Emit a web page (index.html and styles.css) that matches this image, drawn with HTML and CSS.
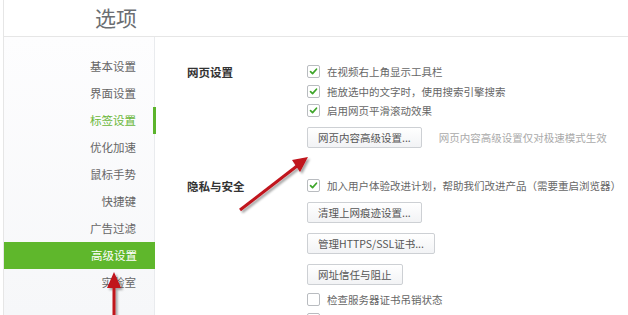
FILE: index.html
```html
<!DOCTYPE html>
<html lang="zh-CN">
<head>
<meta charset="utf-8">
<link rel="stylesheet" href="styles.css">
</head>
<body>
<div class="frame">
  <div class="header"><h1 class="title">选项</h1></div>
  <div class="main">
    <nav class="sidebar">
      <div class="nav-item">基本设置</div>
      <div class="nav-item">界面设置</div>
      <div class="nav-item nav-item--marked">标签设置</div>
      <div class="nav-item">优化加速</div>
      <div class="nav-item">鼠标手势</div>
      <div class="nav-item">快捷键</div>
      <div class="nav-item">广告过滤</div>
      <div class="nav-item nav-item--active">高级设置</div>
      <div class="nav-item">实验室</div>
    </nav>
    <section class="content">
      <div class="group">
        <div class="group-label">网页设置</div>
        <div class="group-body">
          <label class="row"><span class="cb cb--on"><svg viewBox="0 0 13 13"><path d="M3 6.6 L5.4 9 L10 3.8"/></svg></span>在视频右上角显示工具栏</label>
          <label class="row"><span class="cb cb--on"><svg viewBox="0 0 13 13"><path d="M3 6.6 L5.4 9 L10 3.8"/></svg></span>拖放选中的文字时，使用搜索引擎搜索</label>
          <label class="row"><span class="cb cb--on"><svg viewBox="0 0 13 13"><path d="M3 6.6 L5.4 9 L10 3.8"/></svg></span>启用网页平滑滚动效果</label>
          <div class="btn-line btn-line--first"><button class="btn">网页内容高级设置...</button><span class="note">网页内容高级设置仅对极速模式生效</span></div>
        </div>
      </div>
      <div class="group group--second">
        <div class="group-label">隐私与安全</div>
        <div class="group-body">
          <label class="row"><span class="cb cb--on"><svg viewBox="0 0 13 13"><path d="M3 6.6 L5.4 9 L10 3.8"/></svg></span>加入用户体验改进计划，帮助我们改进产品（需要重启浏览器）</label>
          <div class="btn-line btn-line--a"><button class="btn">清理上网痕迹设置...</button></div>
          <div class="btn-line btn-line--b"><button class="btn">管理HTTPS/SSL证书...</button></div>
          <div class="btn-line btn-line--b"><button class="btn">网址信任与阻止</button></div>
          <label class="row row--after-btn"><span class="cb"></span>检查服务器证书吊销状态</label>
          <div class="row"><span class="cb"></span></div>
        </div>
      </div>
    </section>
  </div>
</div>
<svg class="annot" width="628" height="315" viewBox="0 0 628 315">
  <defs>
    <filter id="sh" x="-20%" y="-20%" width="140%" height="140%">
      <feDropShadow dx="2" dy="2" stdDeviation="1.3" flood-color="#000" flood-opacity="0.35"/>
    </filter>
  </defs>
  <g filter="url(#sh)" fill="#c0121b" stroke="#c0121b">
    <line x1="240" y1="210" x2="297" y2="166" stroke-width="3"/>
    <polygon points="308,157 292,160 300,172" stroke="none"/>
    <line x1="114" y1="320" x2="114" y2="285" stroke-width="3"/>
    <polygon points="114,272 107,288 121,288" stroke="none"/>
  </g>
</svg>
</body>
</html>
```

FILE: styles.css
```css
* { box-sizing: border-box; }
html, body {
  margin: 0;
  padding: 0;
  width: 628px;
  height: 315px;
  overflow: hidden;
  background: #fff;
  font-family: "Noto Sans CJK SC", "Noto Sans", sans-serif;
  color: #666;
}
.frame {
  position: relative;
  margin-left: 3px;
  height: 315px;
  border-left: 1px solid #e6e6e6;
}
.header {
  height: 37px;
  border-bottom: 1px solid #e6e6e6;
  padding-left: 91px;
}
.title {
  margin: 0;
  font-size: 21px;
  font-weight: 400;
  line-height: 34px;
  color: #6b6e72;
}
.main {
  display: flex;
  height: 278px;
}
.sidebar {
  width: 151px;
  flex: none;
  padding-top: 16px;
  border-right: 1px solid #e9ebee;
  background: linear-gradient(#fdfdfe, #f6f7f9);
}
.nav-item {
  position: relative;
  height: 27px;
  line-height: 27px;
  text-align: right;
  padding-right: 18px;
  font-size: 11.5px;
  color: #666;
}
.nav-item--marked { color: #6ab73a; }
.nav-item--marked::after {
  content: "";
  position: absolute;
  right: -2px;
  top: 0;
  width: 3px;
  height: 27px;
  background: #5cb42c;
}
.nav-item--active {
  background: #5fb72c;
  color: #fff;
  margin-right: -1px;
}
.content {
  flex: 1;
  padding: 25px 0 0 32px;
}
.group {
  display: grid;
  grid-template-columns: 120px 1fr;
}
.group--second { margin-top: 28px; }
.group-label {
  font-size: 11.5px;
  font-weight: 700;
  color: #333;
  line-height: 20px;
}
.group-body {
  display: flex;
  flex-direction: column;
}
.row {
  display: flex;
  align-items: center;
  height: 19.5px;
  font-size: 10.5px;
  color: #666;
  white-space: nowrap;
}
.cb {
  width: 13px;
  height: 13px;
  flex: none;
  border: 1px solid #b9bcc0;
  border-radius: 2px;
  background: #fff;
  margin-right: 7px;
  display: flex;
}
.cb svg { width: 11px; height: 11px; }
.cb svg path {
  fill: none;
  stroke: #3ea52a;
  stroke-width: 2;
  stroke-linecap: round;
  stroke-linejoin: round;
}
.btn-line {
  display: flex;
  align-items: center;
}
.btn-line--first { margin-top: 6px; }
.btn-line--a { margin-top: 7px; }
.btn-line--b { margin-top: 10px; }
.btn {
  height: 21px;
  padding: 0 10px;
  border: 1px solid #cdd0d4;
  border-radius: 2px;
  background: linear-gradient(#ffffff, #f2f3f5);
  font-family: "Noto Sans CJK SC", "Noto Sans", sans-serif;
  font-size: 10.5px;
  color: #555;
  line-height: 19px;
}
.note {
  margin-left: 17px;
  font-size: 10.5px;
  color: #aaa;
}
.row--after-btn { margin-top: 5px; }
.annot {
  position: absolute;
  left: 0;
  top: 0;
  pointer-events: none;
}
```
